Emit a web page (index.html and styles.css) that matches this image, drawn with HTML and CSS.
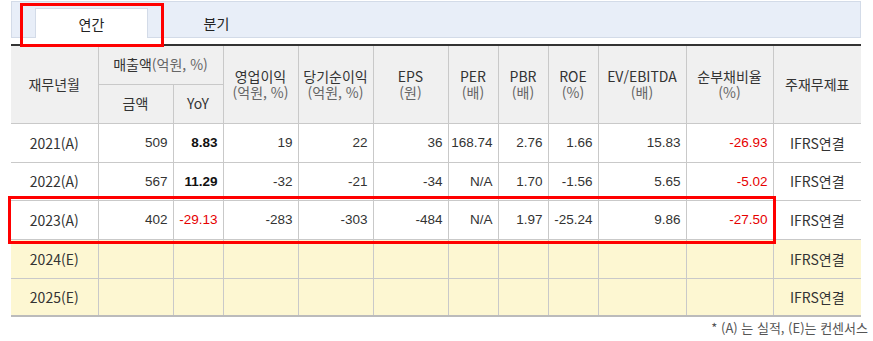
FILE: index.html
```html
<!DOCTYPE html>
<html lang="ko">
<head>
<meta charset="utf-8">
<link rel="stylesheet" href="styles.css">
</head>
<body>
<div class="wrap">
  <div class="tabbar">
    <div class="tab active">연간</div>
    <div class="tab">분기</div>
  </div>
  <table class="fin">
    <colgroup>
      <col class="c87"><col class="c75"><col class="c50"><col class="c75"><col class="c75"><col class="c75"><col class="c50"><col class="c50"><col class="c50"><col class="c88"><col class="c87"><col class="c88">
    </colgroup>
    <thead>
      <tr class="hr1">
        <th rowspan="2">재무년월</th>
        <th colspan="2" class="h1">매출액<span class="sub">(억원, %)</span></th>
        <th rowspan="2"><span class="ln">영업이익</span><span class="ln sub">(억원, %)</span></th>
        <th rowspan="2"><span class="ln">당기순이익</span><span class="ln sub">(억원, %)</span></th>
        <th rowspan="2"><span class="ln">EPS</span><span class="ln sub">(원)</span></th>
        <th rowspan="2"><span class="ln">PER</span><span class="ln sub">(배)</span></th>
        <th rowspan="2"><span class="ln">PBR</span><span class="ln sub">(배)</span></th>
        <th rowspan="2"><span class="ln">ROE</span><span class="ln sub">(%)</span></th>
        <th rowspan="2"><span class="ln">EV/EBITDA</span><span class="ln sub">(배)</span></th>
        <th rowspan="2"><span class="ln">순부채비율</span><span class="ln sub">(%)</span></th>
        <th rowspan="2">주재무제표</th>
      </tr>
      <tr class="hr2">
        <th class="h2">금액</th>
        <th class="h2">YoY</th>
      </tr>
    </thead>
    <tbody>
      <tr class="r39">
        <td class="yr">2021(A)</td><td>509</td><td class="b">8.83</td><td>19</td><td>22</td><td>36</td><td>168.74</td><td>2.76</td><td>1.66</td><td>15.83</td><td class="red">-26.93</td><td class="std">IFRS연결</td>
      </tr>
      <tr class="r38">
        <td class="yr">2022(A)</td><td>567</td><td class="b">11.29</td><td>-32</td><td>-21</td><td>-34</td><td>N/A</td><td>1.70</td><td>-1.56</td><td>5.65</td><td class="red">-5.02</td><td class="std">IFRS연결</td>
      </tr>
      <tr class="r39">
        <td class="yr">2023(A)</td><td>402</td><td class="red">-29.13</td><td>-283</td><td>-303</td><td>-484</td><td>N/A</td><td>1.97</td><td>-25.24</td><td>9.86</td><td class="red">-27.50</td><td class="std">IFRS연결</td>
      </tr>
      <tr class="est r39">
        <td class="yr">2024(E)</td><td></td><td></td><td></td><td></td><td></td><td></td><td></td><td></td><td></td><td></td><td class="std">IFRS연결</td>
      </tr>
      <tr class="est r38">
        <td class="yr">2025(E)</td><td></td><td></td><td></td><td></td><td></td><td></td><td></td><td></td><td></td><td></td><td class="std">IFRS연결</td>
      </tr>
    </tbody>
  </table>
  <p class="note">* (A) 는 실적, (E)는 컨센서스</p>
  <div class="mark mark-tab"></div>
  <div class="mark mark-row"></div>
</div>
</body>
</html>
```

FILE: styles.css
```css
html, body {
  margin: 0;
  padding: 0;
  background: #fff;
}
body {
  font-family: "Noto Sans CJK KR", "Liberation Sans", sans-serif;
  color: #333;
}
.wrap {
  position: relative;
  width: 850px;
  padding: 1px 0 0 11px;
}
.tabbar {
  display: flex;
  gap: 12px;
  height: 29px;
  padding: 6px 0 0 23px;
  background: #e8eef8;
  border: 1px solid #d3dbe8;
  box-sizing: content-box;
}
.tab {
  width: 113px;
  height: 29px;
  display: flex;
  align-items: center;
  justify-content: center;
  font-size: 14px;
  color: #222;
  box-sizing: border-box;
}
.tab.active {
  background: #fff;
  border: 1px solid #d3dbe8;
  border-bottom: none;
  height: 30px;
  margin-bottom: -1px;
}
.fin {
  margin-top: 6px;
  width: 850px;
  border-collapse: collapse;
  table-layout: fixed;
  border-top: 2px solid #333;
  border-bottom: 2px solid #bbb;
}
.c87 { width: 87px; }
.c75 { width: 75px; }
.c50 { width: 50px; }
.c88 { width: 88px; }
.fin tr.hr1 { height: 39px; }
.fin tr.hr2 { height: 39px; }
.fin tr.r39 { height: 39px; }
.fin tr.r38 { height: 38px; }
.fin th {
  background: #f0f0f0;
  font-weight: normal;
  font-size: 14px;
  line-height: 17px;
  color: #333;
  border: 1px solid #c9c9c9;
  border-top: none;
  padding: 0;
  text-align: center;
  vertical-align: middle;
}
.fin th .ln {
  display: block;
  height: 16px;
  line-height: 16px;
  overflow: visible;
}
.fin th:first-child, .fin td:first-child { border-left: none; }
.fin th:last-child, .fin td:last-child { border-right: none; }
.fin .sub {
  color: #666;
}
.fin td {
  font-family: "Liberation Sans", Arial, sans-serif;
  font-size: 13.5px;
  line-height: 16px;
  color: #333;
  border: 1px solid #c9c9c9;
  padding: 1px 5px 0 0;
  text-align: right;
  vertical-align: middle;
}
.fin td.yr,
.fin td.std {
  font-family: "Noto Sans CJK KR", "Liberation Sans", sans-serif;
  text-align: center;
  padding: 0;
  font-size: 14px;
}
.fin td.b {
  font-weight: bold;
  color: #111;
}
.fin td.red {
  color: #e60000;
}
.fin tr.est td {
  background: #fdf7d2;
}
.note {
  margin: 2px 0 0;
  text-align: right;
  font-size: 13px;
  line-height: 18px;
  color: #555;
  width: 857px;
}
.mark {
  position: absolute;
  border: 3px solid #f00;
  box-sizing: border-box;
}
.mark-tab {
  left: 20px;
  top: 3px;
  width: 144px;
  height: 44px;
}
.mark-row {
  left: 8px;
  top: 196px;
  width: 768px;
  height: 48px;
}
```
